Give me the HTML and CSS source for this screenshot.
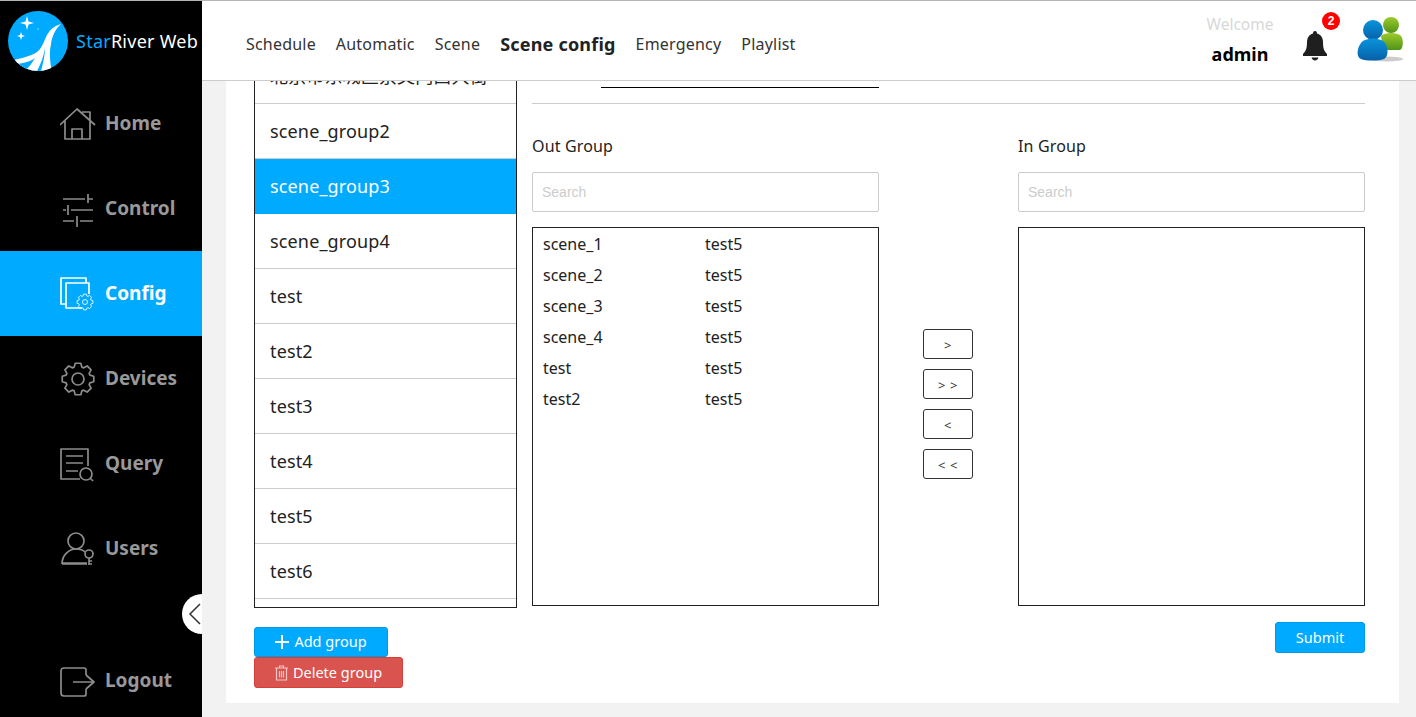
FILE: index.html
```html
<!DOCTYPE html>
<html>
	<head>
		<meta charset="utf-8">
		<title>StarRiver Web</title>
		<link rel="stylesheet" href="styles.css">
	</head>
	<body>
		<div id="sidebar">
			<div class="logo">
				<svg class="logo-mark" width="60" height="60" viewBox="0 0 60 60">
					<defs>
						<clipPath id="logoClip"><circle cx="30" cy="30" r="30"/></clipPath>
					</defs>
					<circle cx="30" cy="30" r="30" fill="#00aaff"/>
					<g clip-path="url(#logoClip)">
						<path d="M53 13 C45 15 41 20 38 26 C35 33 33 38 29 41 C23 45 14 47 6 49 L12 62 H44 C42 50 41 42 43 33 C44 25 48 17 53 13 Z" fill="#fff"/>
						<path d="M37 36 C36 45 33 52 29 60 L33 60 C35 52 37 45 37 36 Z" fill="#00aaff"/>
						<path d="M10 53 C16 52 24 50 27 47 C24 52 21 56 17 60 L12 60 Z" fill="#00aaff"/>
					</g>
					<path d="M19 5 L20.500 10.500 L26 12 L20.500 13.500 L19 19 L17.500 13.500 L12 12 L17.500 10.500 Z" fill="#fff"/>
					<path d="M13 21 L14 24 L17 25 L14 26 L13 29 L12 26 L9 25 L12 24 Z" fill="#fff"/>
					<circle cx="30" cy="18" r="0.800" fill="#a8e0ff"/>
				</svg>
				<span class="logo-text"><span class="logo-star">Star</span>River Web</span>
			</div>
			<a class="nav-item">
				<svg class="nav-icon" viewBox="0 0 36 36"><path d="M0 19 L17 3 L35 19 M5 15 V33 H30 V13 M12 33 V23 H22 V33 M22 6 H30 V13"/></svg>
				<span class="nav-label">Home</span>
			</a>
			<a class="nav-item">
				<svg class="nav-icon" viewBox="0 0 36 36"><path d="M3 8 H25 M28 3 V12 M28 8 H33 M3 19 H6 M8 14 V24 M11 19 H33 M3 30 H14 M17 25 V36 M20 30 H33"/></svg>
				<span class="nav-label">Control</span>
			</a>
			<a class="nav-item active">
				<svg class="nav-icon" viewBox="0 0 36 36">
					<path d="M6 28 H1 V2 H26 V7 M22 32 H6 V7 H29 V18"/>
					<g transform="translate(25 26) scale(.5)">
						<polygon points="15.76,2.78 11.89,3.86 11.14,5.67 13.11,9.18 9.18,13.11 5.67,11.14 3.86,11.89 2.78,15.76 -2.78,15.76 -3.86,11.89 -5.67,11.14 -9.18,13.11 -13.11,9.18 -11.14,5.67 -11.89,3.86 -15.76,2.78 -15.76,-2.78 -11.89,-3.86 -11.14,-5.67 -13.11,-9.18 -9.18,-13.11 -5.67,-11.14 -3.86,-11.89 -2.78,-15.76 2.78,-15.76 3.86,-11.89 5.67,-11.14 9.18,-13.11 13.11,-9.18 11.14,-5.67 11.89,-3.86 15.76,-2.78"/>
						<circle r="5"/>
					</g>
				</svg>
				<span class="nav-label">Config</span>
			</a>
			<a class="nav-item">
				<svg class="nav-icon" viewBox="-18 -18 36 36">
					<polygon points="15.76,2.78 11.89,3.86 11.14,5.67 13.11,9.18 9.18,13.11 5.67,11.14 3.86,11.89 2.78,15.76 -2.78,15.76 -3.86,11.89 -5.67,11.14 -9.18,13.11 -13.11,9.18 -11.14,5.67 -11.89,3.86 -15.76,2.78 -15.76,-2.78 -11.89,-3.86 -11.14,-5.67 -13.11,-9.18 -9.18,-13.11 -5.67,-11.14 -3.86,-11.89 -2.78,-15.76 2.78,-15.76 3.86,-11.89 5.67,-11.14 9.18,-13.11 13.11,-9.18 11.14,-5.67 11.89,-3.86 15.76,-2.78"/>
					<circle r="6"/>
				</svg>
				<span class="nav-label">Devices</span>
			</a>
			<a class="nav-item">
				<svg class="nav-icon" viewBox="0 0 36 36">
					<path d="M20 33 H1 V3 H28 V20 M6 10 H23 M6 17 H23 M6 25 H18 M30 32 L33 35"/>
					<circle cx="26" cy="28" r="6"/>
				</svg>
				<span class="nav-label">Query</span>
			</a>
			<a class="nav-item">
				<svg class="nav-icon" viewBox="0 0 36 36">
					<circle cx="16" cy="10" r="8"/>
					<path d="M2 33 C2 24 9 18 16 18 C20 18 23 19 25 21 M2 33 H27 M2 32 H27 M29 27 V34 M29 30 H32 M29 33 H32"/>
					<circle cx="29" cy="23" r="4"/>
				</svg>
				<span class="nav-label">Users</span>
			</a>
			<a class="nav-item logout">
				<svg class="nav-icon" viewBox="0 0 36 36"><path d="M26 12 V7 Q26 5 24 5 H4 Q1 5 1 8 V30 Q1 33 4 33 H24 Q26 33 26 31 V26 M13 19 H34 M26 12 L34 19 L26 26"/></svg>
				<span class="nav-label">Logout</span>
			</a>
			<div class="collapse-btn">
				<svg width="20" height="40" viewBox="0 0 20 40"><path d="M18 10 L8 20 L18 30" fill="none" stroke="#333" stroke-width="1.5"/></svg>
			</div>
		</div>

		<div id="content">
			<div id="header">
				<div class="tabs">
					<a class="tab">Schedule</a>
					<a class="tab">Automatic</a>
					<a class="tab">Scene</a>
					<a class="tab tab-active">Scene config</a>
					<a class="tab">Emergency</a>
					<a class="tab">Playlist</a>
				</div>
				<div class="user-box">
					<div class="welcome">Welcome</div>
					<div class="user-name">admin</div>
				</div>
				<div class="bell">
					<svg width="24" height="30" viewBox="0 0 24 30">
						<path d="M12 0 C10.5 0 10 1 10 2.5 C6 3.5 4 7 4 11 C4 17 3 20 0 23 V25 H24 V23 C21 20 20 17 20 11 C20 7 18 3.5 14 2.5 C14 1 13.500 0 12 0 Z M8.500 26.500 H15.500 C15 28.500 13.500 29.500 12 29.500 C10.500 29.500 9 28.500 8.500 26.500 Z" fill="#1f1f1f"/>
					</svg>
					<span class="badge">2</span>
				</div>
				<svg class="avatar" width="48" height="48" viewBox="0 0 48 48">
					<defs>
						<linearGradient id="blueGrad" x1="0" y1="0" x2="0" y2="1">
							<stop offset="0" stop-color="#0a94dc"/>
							<stop offset="1" stop-color="#0660a8"/>
						</linearGradient>
						<linearGradient id="greenGrad" x1="0" y1="0" x2="0" y2="1">
							<stop offset="0" stop-color="#9ccb2c"/>
							<stop offset="1" stop-color="#4f9418"/>
						</linearGradient>
					</defs>
					<ellipse cx="30" cy="44" rx="17" ry="2.500" fill="#ccc"/>
					<circle cx="35" cy="10" r="8" fill="url(#greenGrad)"/>
					<path d="M25 21 C28 17 42 17 45 21 C48 25 47 34 44 35 H27 Z" fill="url(#greenGrad)"/>
					<circle cx="17" cy="15" r="10" fill="url(#blueGrad)"/>
					<path d="M5 28 C9 22 25 22 29 28 C33 34 32 42 28 44 C22 46 10 46 5 44 C0 42 1 33 5 28 Z" fill="url(#blueGrad)"/>
				</svg>
			</div>

			<div id="main">
				<div class="panel">
					<div class="panel-body">
						<div class="group-col">
							<div class="group-list">
								<div class="group-row">北京市东城区崇文门西大街</div>
								<div class="group-row">scene_group2</div>
								<div class="group-row selected">scene_group3</div>
								<div class="group-row">scene_group4</div>
								<div class="group-row">test</div>
								<div class="group-row">test2</div>
								<div class="group-row">test3</div>
								<div class="group-row">test4</div>
								<div class="group-row">test5</div>
								<div class="group-row">test6</div>
							</div>
							<button class="btn btn-add">
								<svg width="14" height="14" viewBox="0 0 14 14"><path d="M7 0 V14 M0 7 H14" stroke="#fff" stroke-width="2"/></svg>
								<span class="btn-label">Add group</span>
							</button>
							<button class="btn btn-delete">
								<svg width="13" height="16" viewBox="0 0 13 16"><path d="M0 3 H13 M4.500 3 V1 H8.500 V3 M1.500 3 V15 H11.500 V3 M4.500 6 V12.500 M6.500 6 V12.500 M8.500 6 V12.500" fill="none" stroke="#f3c6c4" stroke-width="1.200"/></svg>
								<span class="btn-label">Delete group</span>
							</button>
						</div>
						<div class="form-col">
							<div class="name-row"><div class="name-line"></div></div>
							<div class="form-line"></div>
							<div class="transfer">
								<div class="transfer-col">
									<div class="transfer-title">Out Group</div>
									<input class="search" placeholder="Search">
									<div class="scene-list">
										<div class="scene-row"><span class="scene-name">scene_1</span>test5</div>
										<div class="scene-row"><span class="scene-name">scene_2</span>test5</div>
										<div class="scene-row"><span class="scene-name">scene_3</span>test5</div>
										<div class="scene-row"><span class="scene-name">scene_4</span>test5</div>
										<div class="scene-row"><span class="scene-name">test</span>test5</div>
										<div class="scene-row"><span class="scene-name">test2</span>test5</div>
									</div>
								</div>
								<div class="move-btns">
									<button class="move-btn">&gt;</button>
									<button class="move-btn">&gt; &gt;</button>
									<button class="move-btn">&lt;</button>
									<button class="move-btn">&lt; &lt;</button>
								</div>
								<div class="transfer-col">
									<div class="transfer-title">In Group</div>
									<input class="search" placeholder="Search">
									<div class="scene-list"></div>
									<button class="btn btn-submit"><span class="btn-label">Submit</span></button>
								</div>
							</div>
						</div>
					</div>
				</div>
			</div>
		</div>
	</body>
</html>
```

FILE: styles.css
```css
* {
	box-sizing: border-box;
}

body {
	margin: 0;
	height: 717px;
	overflow: hidden;
	display: flex;
	border-top: solid 1px #b5b5b5;
	font-family: "Noto Sans", "Noto Sans CJK SC", sans-serif;
	font-size: 16px;
	color: #222222;
	background: #f2f2f2;
}

/* sidebar */
#sidebar {
	position: relative;
	width: 202px;
	flex-shrink: 0;
	background: #000000;
	overflow: hidden;
}

.logo {
	height: 80px;
	display: flex;
	align-items: center;
	padding-left: 8px;
}

.logo-text {
	margin-left: 8px;
	font-size: 18px;
	letter-spacing: .25px;
	color: #ffffff;
	white-space: nowrap;
}

.logo-star {
	color: #00aaff;
}

.nav-item {
	height: 85px;
	display: flex;
	align-items: center;
	padding-left: 60px;
	gap: 9px;
	font-size: 19px;
	font-weight: 700;
	color: #999999;
}

.nav-label {
	margin-top: -2px;
}

.nav-item.active {
	background: #00aaff;
	color: #ffffff;
}

.nav-icon {
	width: 36px;
	height: 36px;
	fill: none;
	stroke: #8c8c8c;
	stroke-width: 1.7;
	stroke-linejoin: round;
}

.active .nav-icon {
	stroke: #ffffff;
}

.logout {
	margin-top: 47px;
}

.collapse-btn {
	position: absolute;
	right: 0;
	top: 593px;
	width: 20px;
	height: 40px;
	background: #ffffff;
	border-radius: 20px 0 0 20px;
}

/* header */
#content {
	flex: 1;
	min-width: 0;
	display: flex;
	flex-direction: column;
}

#header {
	height: 80px;
	flex-shrink: 0;
	display: flex;
	align-items: center;
	padding-left: 44px;
	background: #ffffff;
	border-bottom: solid 1px #cccccc;
}

.tabs {
	display: flex;
	align-items: center;
	gap: 20px;
	flex: 1;
	margin-top: 6px;
	letter-spacing: .2px;
	color: #333333;
}

.tab-active {
	font-size: 18px;
	font-weight: 700;
	color: #222222;
}

.user-box {
	width: 64px;
	margin-bottom: 3px;
	text-align: center;
	white-space: nowrap;
	display: flex;
	flex-direction: column;
	align-items: center;
	gap: 7px;
}

.welcome {
	font-size: 15.5px;
	color: #d8d8d8;
}

.user-name {
	font-size: 18px;
	font-weight: 700;
	color: #000000;
}

.bell {
	position: relative;
	margin: 10px 0 0 31px;
	height: 30px;
	width: 24px;
}

.badge {
	position: absolute;
	left: 19px;
	top: -19px;
	width: 18px;
	height: 18px;
	border-radius: 50%;
	background: #ff0000;
	color: #ffffff;
	font-family: "Liberation Sans", sans-serif;
	font-size: 12px;
	font-weight: 700;
	line-height: 18px;
	text-align: center;
}

.avatar {
	margin: 0 12px 3px 29px;
}

/* main panel */
#main {
	flex: 1;
	min-height: 0;
	display: flex;
	padding: 0 17px 14px 24px;
}

.panel {
	flex: 1;
	background: #ffffff;
	overflow: hidden;
}

.panel-body {
	display: flex;
	gap: 15px;
	margin-top: -33px;
	padding: 0 34px 0 28px;
}

.group-col {
	width: 263px;
	flex-shrink: 0;
	display: flex;
	flex-direction: column;
	align-items: flex-start;
}

.group-list {
	width: 263px;
	height: 560px;
	margin-bottom: 19px;
	overflow: hidden;
	border: solid 1px #222222;
}

.group-row {
	height: 55px;
	line-height: 54px;
	padding-left: 15px;
	font-size: 18px;
	letter-spacing: .15px;
	border-bottom: solid 1px #cccccc;
}

.group-row.selected {
	background: #00aaff;
	color: #ffffff;
	border-bottom-color: #00aaff;
}

.btn {
	display: flex;
	align-items: center;
	justify-content: center;
	gap: 5px;
	border-radius: 3px;
	color: #ffffff;
	font-family: inherit;
	font-size: 14.5px;
	padding: 0;
}

.btn-label {
	margin-top: -2px;
}

.btn-add {
	width: 134px;
	height: 30px;
	background: #00aaff;
	border: solid 1px #0099e6;
}

.btn-delete {
	width: 149px;
	height: 31px;
	background: #d9534f;
	border: solid 1px #d43f3a;
}

.btn-submit {
	width: 90px;
	height: 31px;
	margin: 16px 0 0 auto;
	background: #00aaff;
	border: solid 1px #0099e6;
}

.form-col {
	flex: 1;
}

.name-row {
	height: 40px;
	padding: 39px 0 0 69px;
}

.name-line {
	width: 278px;
	border-bottom: solid 1px #000000;
}

.form-line {
	margin-top: 15px;
	border-bottom: solid 1px #cccccc;
}

.transfer {
	display: flex;
	justify-content: space-between;
	align-items: flex-start;
}

.transfer-col {
	width: 347px;
	display: flex;
	flex-direction: column;
}

.transfer-title {
	margin-top: 30px;
	line-height: 24px;
	letter-spacing: .15px;
}

.search {
	height: 40px;
	margin-top: 14px;
	padding: 0 9px;
	border: solid 1px #cccccc;
	border-radius: 2px;
	font-family: "Liberation Sans", sans-serif;
	font-size: 14px;
}

.search::placeholder {
	color: #cccccc;
}

.scene-list {
	height: 379px;
	margin-top: 15px;
	padding: 1px 10px;
	border: solid 1px #222222;
}

.scene-row {
	height: 31px;
	line-height: 31px;
	display: flex;
}

.scene-name {
	width: 162px;
}

.move-btns {
	display: flex;
	flex-direction: column;
	gap: 10px;
	padding-top: 225px;
	margin-right: 1px;
}

.move-btn {
	width: 50px;
	height: 30px;
	padding: 2px 0 0;
	background: #ffffff;
	border: solid 1px #333333;
	border-radius: 3px;
	color: #333333;
	font-family: inherit;
	font-size: 13px;
	letter-spacing: .5px;
}
```
